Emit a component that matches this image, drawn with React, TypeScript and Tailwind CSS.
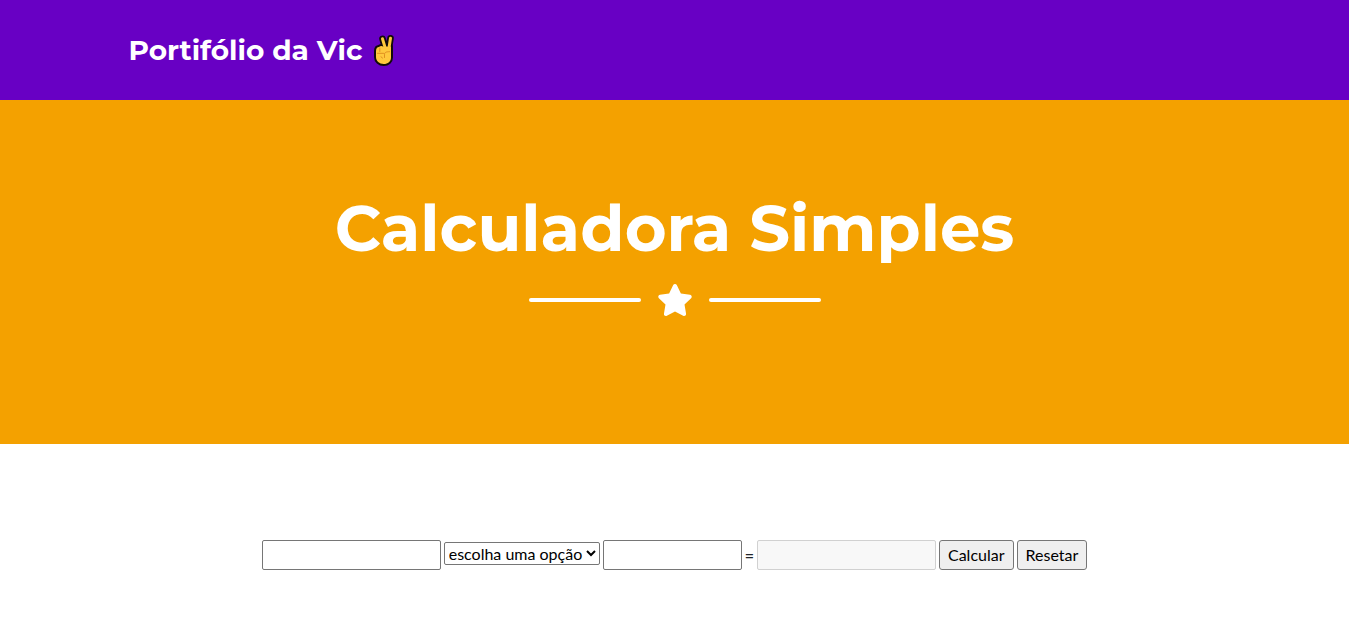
import { useState } from "react";
import { FaStar } from "react-icons/fa";

const field =
  "h-[30px] rounded-[2px] border border-[#767676] bg-white px-1 text-base disabled:border-[#d1d1d1] disabled:bg-[#f8f8f8]";
const action =
  "h-[30px] rounded-[3px] border border-[#767676] bg-[#efefef] px-2 text-base leading-6 hover:bg-[#e5e5e5]";

const palm =
  "M5 17c0-2.500 1.300-4 3-4 1.200-1.200 3.300-1.200 4.300-.2L20 12.500v11c0 4-3 6.500-7.300 6.500S5 27 5 23z";

function Victory() {
  return (
    <svg className="h-8 w-6 shrink-0" viewBox="0 0 24 32" aria-label="✌" role="img">
      <g stroke="#120d08" strokeLinejoin="round" strokeLinecap="round" fill="#120d08">
        <path d="M11.500 4.800 14.500 15M19.500 4.300 17.800 15" strokeWidth="6.600" />
        <path d={palm} strokeWidth="4" />
      </g>
      <g fill="#ffc83d">
        <path d="M11.500 4.800 14.500 15M19.500 4.300 17.800 15" stroke="#ffc83d" strokeWidth="3" strokeLinecap="round" />
        <path d={palm} />
      </g>
      <path
        d="M6.500 19.300h5.500c1 0 1.500.6 1.500 1.400v2.800M8.800 14v3.500M13.500 20c0-1.600 1.500-2.300 5-2.300M10 22.800l1.500 1.200"
        fill="none"
        stroke="#e08f1f"
        strokeWidth="1"
        strokeLinecap="round"
      />
    </svg>
  );
}

export default function App() {
  const [a, setA] = useState("");
  const [b, setB] = useState("");
  const [op, setOp] = useState("");
  const [result, setResult] = useState("");

  const calculate = () => {
    const x = Number(a);
    const y = Number(b);
    const results: Record<string, number> = { "+": x + y, "-": x - y, "*": x * y, "/": x / y };
    setResult(op in results ? String(results[op]) : "");
  };
  const reset = () => {
    setA("");
    setB("");
    setOp("");
    setResult("");
  };

  return (
    <div className="bg-white font-['Lato',sans-serif] text-base text-black">
      <nav className="bg-[#6800c4]">
        <div className="mx-auto flex max-w-[1140px] items-center px-6 py-7">
          <a href="#" className="flex items-center gap-2 font-['Montserrat','Inter',sans-serif] text-[28px] leading-[44px] font-bold text-white">
            Portifólio da Vic <Victory />
          </a>
        </div>
      </nav>
      <header className="flex flex-col items-center gap-6 bg-[#f4a100] px-6 pt-24 pb-32 text-center text-white">
        <h1 className="font-['Montserrat','Inter',sans-serif] text-[64px] leading-[64px] font-bold">Calculadora Simples</h1>
        <div className="flex items-center gap-4" aria-hidden="true">
          <span className="h-1 w-28 rounded-full bg-white" />
          <FaStar className="h-8 w-9" />
          <span className="h-1 w-28 rounded-full bg-white" />
        </div>
      </header>
      <main className="flex flex-wrap items-center justify-center gap-[3px] px-6 pt-24 pb-12">
        <input aria-label="Primeiro número" className={`${field} w-[179px]`} value={a} onChange={(e) => setA(e.target.value)} />
        <select
          aria-label="Operação"
          className="mb-1 h-[23px] w-[156px] rounded-[2px] border border-[#767676] bg-white text-base"
          value={op}
          onChange={(e) => setOp(e.target.value)}
        >
          <option value="">escolha uma opção</option>
          <option value="+">+</option>
          <option value="-">-</option>
          <option value="*">*</option>
          <option value="/">/</option>
        </select>
        <input aria-label="Segundo número" className={`${field} w-[139px]`} value={b} onChange={(e) => setB(e.target.value)} />
        <span className="font-bold text-[#212529]">=</span>
        <input aria-label="Resultado" disabled className={`${field} w-[179px]`} value={result} />
        <button type="button" className={action} onClick={calculate}>Calcular</button>
        <button type="button" className={action} onClick={reset}>Resetar</button>
      </main>
    </div>
  );
}
